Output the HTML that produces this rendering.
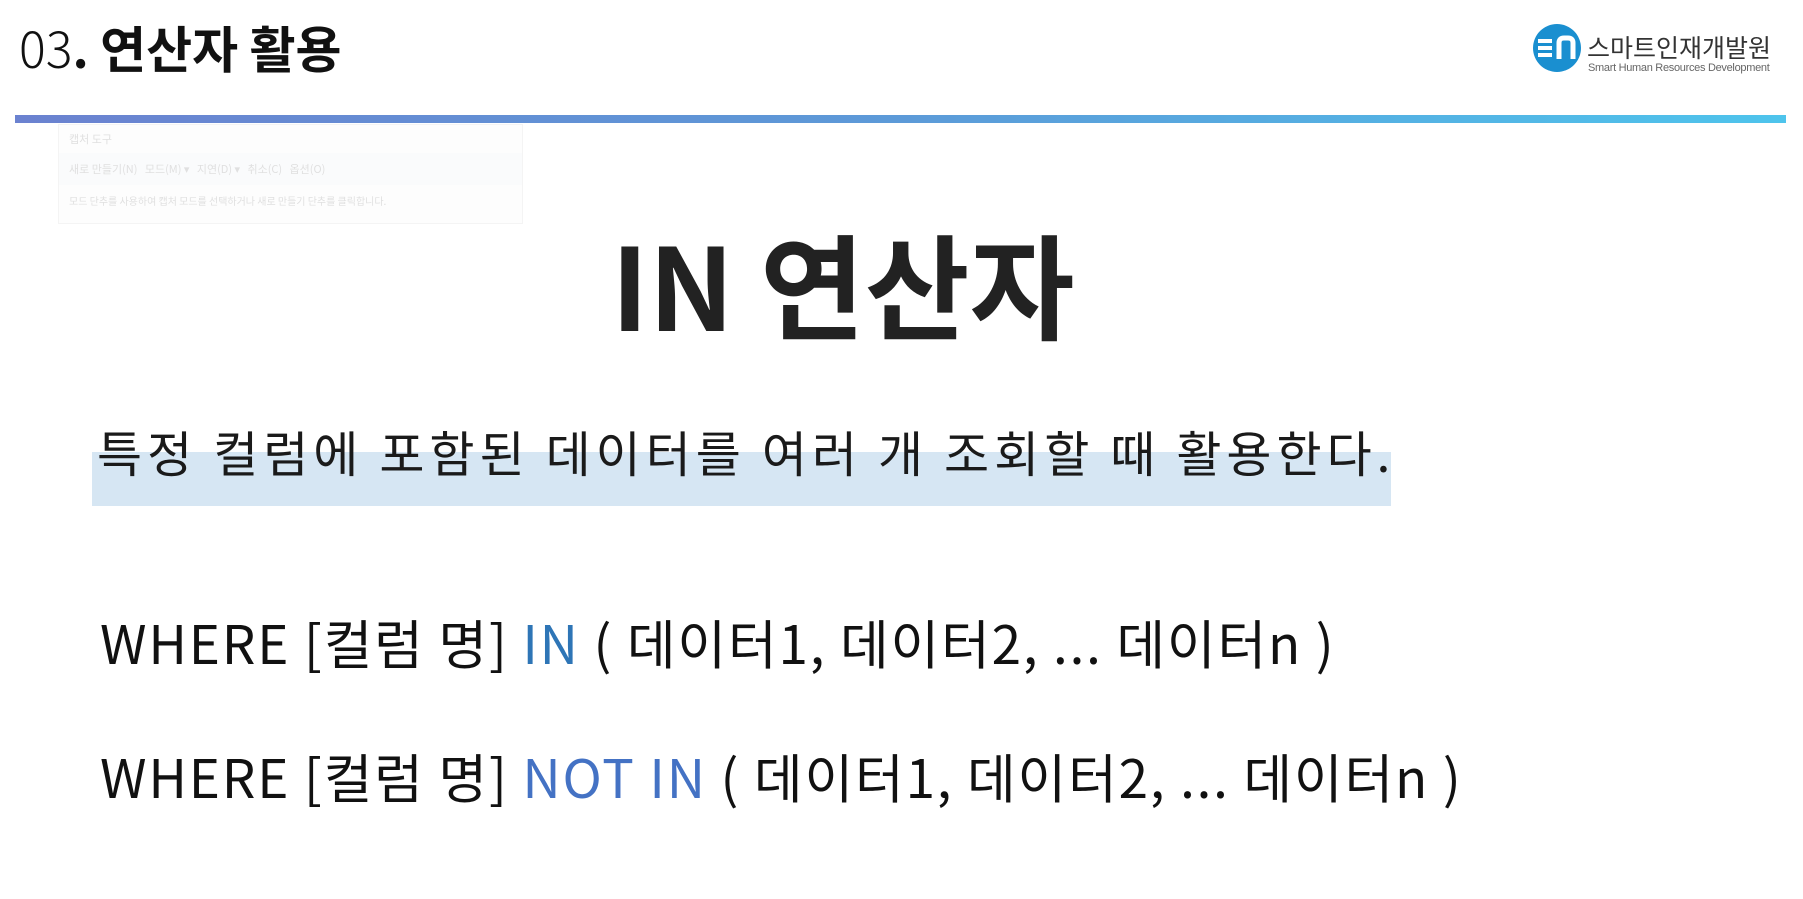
<!DOCTYPE html>
<html><head><meta charset="utf-8"><style>
*{margin:0;padding:0;box-sizing:border-box}
body{width:1803px;height:899px;background:#fff;position:relative;overflow:hidden;font-family:"Liberation Sans","Noto Sans CJK KR",sans-serif;color:#111}
.abs{position:absolute;white-space:nowrap}
.kr{font-family:"Noto Sans CJK KR",sans-serif}
</style></head><body>
<div class="abs kr" style="left:19px;top:12px;font-size:50px;line-height:70px"><span style="font-weight:300">03</span><b>. 연산자 활용</b></div>
<div class="abs" style="left:15px;top:115px;width:1771px;height:8px;background:linear-gradient(90deg,#6b82d0,#5c9ad8 50%,#4ec4ec)"></div>
<svg class="abs" style="left:1532px;top:23px" width="50" height="50" viewBox="0 0 50 50"><circle cx="25" cy="25" r="24" fill="#1a8fd0"/><path d="M6 18h14M6 25h14M6 32h14" stroke="#fff" stroke-width="4"/><path d="M27 36V20q0-5 5-5h4q5 0 5 5v16" stroke="#fff" stroke-width="5" fill="none"/></svg>
<div class="abs kr" style="left:1587px;top:31px;font-size:25px;line-height:32px;color:#333">스마트인재개발원</div>
<div class="abs" style="left:1588px;top:62px;font-size:11px;color:#666;letter-spacing:-0.3px">Smart Human Resources Development</div>
<div class="abs" style="left:58px;top:124px;width:465px;height:100px;border:1px solid #eee;background:#fdfdfd;opacity:.6">
<div class="kr" style="font-size:11px;color:#ccc;padding:6px 10px">캡처 도구</div>
<div class="kr" style="font-size:11px;color:#ccc;padding:8px 10px;background:#f8f9fb">새로 만들기(N) &nbsp; 모드(M) ▾ &nbsp; 지연(D) ▾ &nbsp; 취소(C) &nbsp; 옵션(O)</div>
<div class="kr" style="font-size:10px;color:#ccc;padding:8px 10px">모드 단추를 사용하여 캡처 모드를 선택하거나 새로 만들기 단추를 클릭합니다.</div>
</div>
<div class="abs kr" style="left:611px;top:202px;font-size:114px;font-weight:700;line-height:160px;color:#222">IN 연산자</div>
<div class="abs" style="left:92px;top:452px;width:1299px;height:54px;background:#d6e6f3"></div>
<div class="abs kr" style="left:97px;top:417px;font-size:49px;line-height:70px;color:#1a1a1a;letter-spacing:5px">특정 컬럼에 포함된 데이터를 여러 개 조회할 때 활용한다.</div>
<div class="abs kr" style="left:100px;top:604px;font-size:53px;line-height:76px;color:#111;letter-spacing:1.8px">WHERE [컬럼 명] <span style="color:#2e75b6">IN</span> ( 데이터1, 데이터2, ... 데이터n )</div>
<div class="abs kr" style="left:100px;top:738px;font-size:53px;line-height:76px;color:#111;letter-spacing:1.8px">WHERE [컬럼 명] <span style="color:#4472c4">NOT IN</span> ( 데이터1, 데이터2, ... 데이터n )</div>
</body></html>
